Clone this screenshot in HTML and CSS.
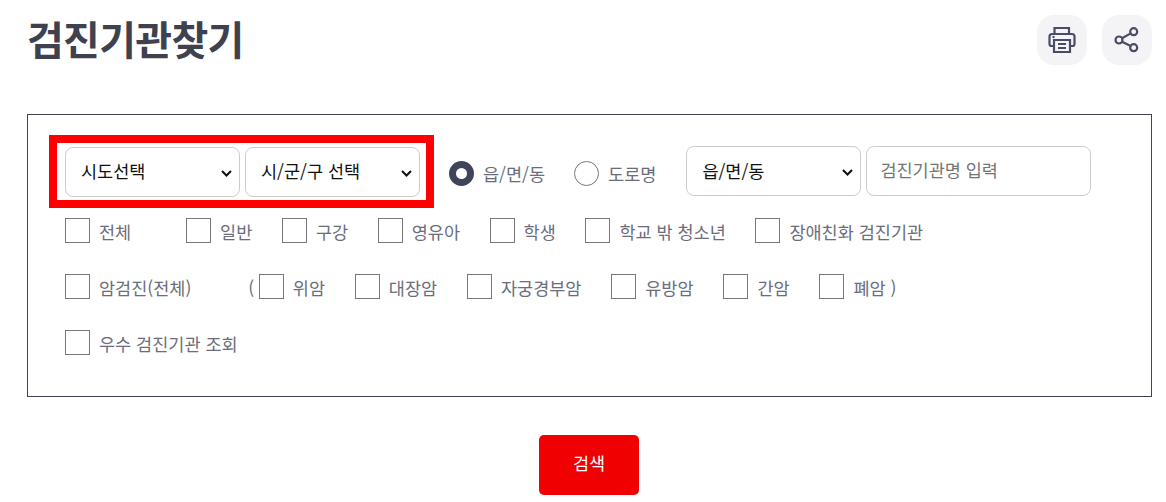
FILE: index.html
```html
<!DOCTYPE html>
<html lang="ko">
<head>
	<meta charset="UTF-8">
	<title>검진기관찾기</title>
	<link rel="stylesheet" href="styles.css">
</head>
<body>
	<div class="head">
		<h1 class="title">검진기관찾기</h1>
		<div class="tools">
			<button class="tool" type="button" aria-label="인쇄">
				<svg width="28" height="28" viewBox="0 0 28 28" fill="none" stroke="#4a4c63" stroke-width="2.200">
					<path d="M6.500 8V2h14.500v6"/>
					<path d="M6 20H3.500a2 2 0 0 1-2-2V10.500A2.500 2.500 0 0 1 4 8h20a2.500 2.500 0 0 1 2.500 2.500V18a2 2 0 0 1-2 2H22"/>
					<path d="M6 14h16v12H6z"/>
					<path d="M10 18h8M10 22h8"/>
					<path d="M4.500 11h2"/>
				</svg>
			</button>
			<button class="tool" type="button" aria-label="공유">
				<svg width="28" height="28" viewBox="0 0 28 28" fill="none" stroke="#4a4c63" stroke-width="2.200">
					<circle cx="20.700" cy="5.700" r="3.500"/>
					<circle cx="6" cy="14" r="3.500"/>
					<circle cx="20.700" cy="21.700" r="3.500"/>
					<path d="M9 12.300L17.700 7.400M9 15.700L17.700 20"/>
				</svg>
			</button>
		</div>
	</div>

	<div class="search">
		<div class="top">
			<div class="mark">
				<select class="sel"><option>시도선택</option></select>
				<select class="sel"><option>시/군/구 선택</option></select>
			</div>
			<label class="radio on"><i></i>읍/면/동</label>
			<label class="radio"><i></i>도로명</label>
			<select class="sel sel3"><option>읍/면/동</option></select>
			<input class="name" type="text" placeholder="검진기관명 입력">
		</div>

		<div class="row row1">
			<label class="chk first"><i></i>전체</label>
			<label class="chk"><i></i>일반</label>
			<label class="chk"><i></i>구강</label>
			<label class="chk"><i></i>영유아</label>
			<label class="chk"><i></i>학생</label>
			<label class="chk"><i></i>학교 밖 청소년</label>
			<label class="chk"><i></i>장애친화 검진기관</label>
		</div>
		<div class="row row2">
			<label class="chk cancer"><i></i>암검진(전체)</label>
			<span class="paren">(</span>
			<label class="chk"><i></i>위암</label>
			<label class="chk"><i></i>대장암</label>
			<label class="chk"><i></i>자궁경부암</label>
			<label class="chk"><i></i>유방암</label>
			<label class="chk"><i></i>간암</label>
			<label class="chk"><i></i>폐암 )</label>
		</div>
		<div class="row">
			<label class="chk"><i></i>우수 검진기관 조회</label>
		</div>
	</div>

	<div class="btns">
		<button class="go" type="button">검색</button>
	</div>
</body>
</html>
```

FILE: styles.css
```css
*{
	padding: 0;
	margin: 0;
	box-sizing: border-box;
}
body{
	width: 1166px;
	padding: 15px 14px 0 27px;
	font-family: "Noto Sans CJK KR", "Liberation Sans", sans-serif;
	font-size: 17.5px;
	color: #6b6d7c;
	background: #fff;
	overflow: hidden;
}
.head{
	display: flex;
	justify-content: space-between;
	height: 99px;
}
.title{
	font-size: 40px;
	line-height: 46px;
	font-weight: 700;
	color: #40414f;
	letter-spacing: -0.7px;
}
.tools{
	display: flex;
	gap: 15px;
}
.tool{
	width: 50px;
	height: 50px;
	border: 0;
	border-radius: 17px;
	background: #f4f4f7;
	display: flex;
	align-items: center;
	justify-content: center;
}
.search{
	height: 283px;
	border: 1px solid #40445a;
	padding: 19px 21px 0;
}
.top{
	display: flex;
	align-items: center;
	height: 74px;
	margin-bottom: 10px;
}
.mark{
	display: flex;
	gap: 5px;
	padding: 4px 6px 3px 8px;
	border: 8px solid #f00;
	margin-right: 15px;
}
.sel{
	appearance: none;
	width: 175px;
	height: 50px;
	padding: 0 24px 2px 15px;
	border: 1px solid #ccc;
	border-radius: 8px;
	background: #fff url("data:image/svg+xml,%3Csvg xmlns='http://www.w3.org/2000/svg' width='11' height='7' fill='none' stroke='%23111' stroke-width='2'%3E%3Cpath d='M1 1l4.500 4.500L10 1'/%3E%3C/svg%3E") no-repeat right 7px top 22px;
	color: #111;
	font-family: inherit;
	font-size: 17.5px;
}
.sel3{
	margin-left: 30px;
	margin-right: 5px;
}
.name{
	width: 225px;
	height: 50px;
	padding: 0 13px 4px;
	border: 1px solid #ccc;
	border-radius: 8px;
	font-family: inherit;
	font-size: 17.5px;
}
.name::placeholder{
	color: #757575;
}
.radio{
	display: flex;
	align-items: center;
	gap: 9px;
	margin-top: 4px;
	margin-right: 29px;
}
.radio i{
	width: 25px;
	height: 25px;
	border: 1px solid #777;
	border-radius: 50%;
}
.radio.on i{
	border: 7px solid #40445a;
}
.radio:nth-of-type(2){
	margin-right: 0;
}
.row{
	display: flex;
	align-items: flex-start;
	gap: 30px;
	padding-left: 16px;
	height: 25px;
	margin-bottom: 31px;
}
.row1{
	gap: 29.6px;
}
.row2{
	gap: 29.8px;
}
.chk{
	display: flex;
	align-items: flex-start;
	gap: 9px;
	line-height: 27px;
	white-space: nowrap;
}
.chk i{
	flex: none;
	width: 25px;
	height: 25px;
	border: 1px solid #777;
	background: #fff;
}
.first{
	margin-right: 25.3px;
}
.cancer{
	margin-right: 27px;
}
.paren{
	line-height: 27px;
	margin-right: -25px;
}
.btns{
	display: flex;
	justify-content: center;
	padding-top: 38px;
	padding-right: 1px;
}
.go{
	width: 100px;
	height: 60px;
	padding-bottom: 5px;
	border: 0;
	border-radius: 5px;
	background: #f00000;
	color: #fff;
	font-family: inherit;
	font-size: 17.5px;
}
```
